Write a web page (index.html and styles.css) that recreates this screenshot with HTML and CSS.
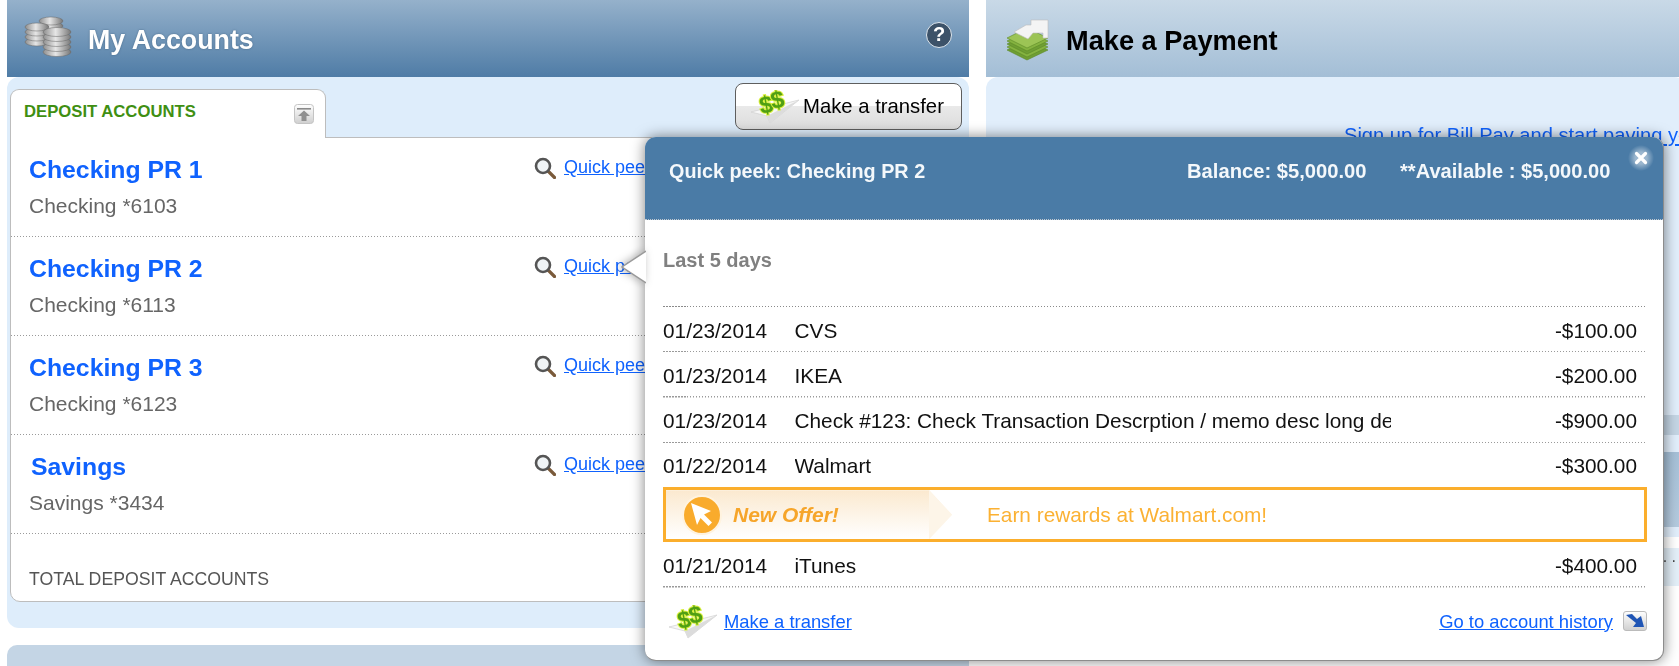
FILE: index.html
```html
<!DOCTYPE html>
<html lang="en">
<head>
<meta charset="utf-8">
<title>My Accounts</title>
<link rel="stylesheet" href="styles.css">
</head>
<body>
<svg class="defs" width="0" height="0" aria-hidden="true">
  <defs>
    <linearGradient id="coin" x1="0" x2="1" y1="0" y2="0"><stop offset="0" stop-color="#8d8d8d"/><stop offset=".45" stop-color="#e6e6e6"/><stop offset="1" stop-color="#777"/></linearGradient>
    <linearGradient id="sq" x1="0" x2="0" y1="0" y2="1"><stop offset="0" stop-color="#fff"/><stop offset="1" stop-color="#cfcfcf"/></linearGradient>
    <radialGradient id="glow"><stop offset=".45" stop-color="#fff" stop-opacity=".45"/><stop offset="1" stop-color="#fff" stop-opacity="0"/></radialGradient>
    <symbol id="lens" viewBox="0 0 22 22">
      <line x1="14" y1="14" x2="20.5" y2="20.5" stroke="#7a5a3a" stroke-width="3.2" stroke-linecap="round"/>
      <circle cx="9" cy="9" r="7" fill="#f0f4f6" stroke="#555" stroke-width="2.6"/>
    </symbol>
    <symbol id="plane" viewBox="0 0 50 34">
      <polygon points="1,22 49,10 20,33 17,26" fill="#f7f7f7" stroke="#d0d0d0" stroke-width=".7"/>
      <polygon points="17,26 49,10 20,33" fill="#dcdcdc"/>
      <g transform="rotate(-10 22 12)">
        <text x="9" y="22" class="dollar">$</text>
        <text x="21" y="19" class="dollar">$</text>
      </g>
    </symbol>
  </defs>
</svg>

<main class="page">
  <section class="col col-left">
    <header class="head head-dark">
      <svg class="coins" viewBox="0 0 50 44" aria-hidden="true">
        <g fill="url(#coin)" stroke="#666" stroke-width=".5">
          <ellipse cx="27" cy="16" rx="12" ry="4"/><ellipse cx="27" cy="11" rx="12" ry="4"/><ellipse cx="27" cy="6" rx="12" ry="4"/>
          <ellipse cx="13" cy="27" rx="12" ry="4"/><ellipse cx="13" cy="22" rx="12" ry="4"/><ellipse cx="13" cy="17" rx="12" ry="4"/><ellipse cx="13" cy="12" rx="12" ry="4"/>
          <ellipse cx="33" cy="37" rx="14" ry="4.5"/><ellipse cx="33" cy="32" rx="14" ry="4.5"/><ellipse cx="33" cy="27" rx="14" ry="4.5"/><ellipse cx="33" cy="22" rx="14" ry="4.5"/><ellipse cx="33" cy="17" rx="14" ry="4.5"/>
        </g>
      </svg>
      <h1 class="title title-light">My Accounts</h1>
      <span class="help">?</span>
    </header>
    <div class="body">
      <div class="tabbar">
        <div class="tab">
          <span class="tab-label">DEPOSIT ACCOUNTS</span>
          <svg class="tab-icon" viewBox="0 0 20 20" aria-hidden="true">
            <rect x=".5" y=".5" width="19" height="19" rx="3" fill="url(#sq)" stroke="#c4c4c4"/>
            <rect x="3" y="4" width="14" height="1.6" fill="#8a8a8a"/>
            <polygon points="10,6.5 16,12 12.5,12 12.5,17 7.5,17 7.5,12 4,12" fill="#8f8f8f"/>
          </svg>
        </div>
        <button class="btn" type="button">
          <svg class="plane-btn" aria-hidden="true"><use href="#plane"/></svg>
          Make a transfer
        </button>
      </div>
      <div class="card">
        <div class="acct">
          <div><a class="acct-name">Checking PR 1</a><p class="acct-sub">Checking *6103</p></div>
          <div class="peek"><svg class="lens" aria-hidden="true"><use href="#lens"/></svg><a class="link">Quick peek</a></div>
        </div>
        <div class="acct">
          <div><a class="acct-name">Checking PR 2</a><p class="acct-sub">Checking *6113</p></div>
          <div class="peek"><svg class="lens" aria-hidden="true"><use href="#lens"/></svg><a class="link">Quick peek</a></div>
        </div>
        <div class="acct">
          <div><a class="acct-name">Checking PR 3</a><p class="acct-sub">Checking *6123</p></div>
          <div class="peek"><svg class="lens" aria-hidden="true"><use href="#lens"/></svg><a class="link">Quick peek</a></div>
        </div>
        <div class="acct">
          <div><a class="acct-name acct-name-sav">Savings</a><p class="acct-sub">Savings *3434</p></div>
          <div class="peek"><svg class="lens" aria-hidden="true"><use href="#lens"/></svg><a class="link">Quick peek</a></div>
        </div>
        <div class="total">TOTAL DEPOSIT ACCOUNTS</div>
      </div>
    </div>
    <div class="next-panel"></div>
  </section>

  <section class="col col-right">
    <header class="head head-light">
      <svg class="money" viewBox="0 0 44 44" aria-hidden="true">
        <g stroke="#5c8a26" stroke-width=".6">
          <polygon points="1,31 21,41 42,31 21,21" fill="#6f9e33"/>
          <polygon points="1,28 21,38 42,28 21,18" fill="#85b340"/>
          <polygon points="1,25 21,35 42,25 21,15" fill="#6f9e33"/>
          <polygon points="1,22 21,32 42,22 21,12" fill="#85b340"/>
          <polygon points="1,19 21,29 42,19 21,9" fill="#9cc455"/>
        </g>
        <polygon points="8,13 20,6 25,6 25,1 42,1 42,19 37,19 37,14 27,14 22,20" fill="#f4f4f4" stroke="#bcbcbc" stroke-width=".6"/>
      </svg>
      <h2 class="title title-dark">Make a Payment</h2>
    </header>
    <div class="pay-body"><a class="link link-bill">Sign up for Bill Pay and start paving your bills online</a></div>
    <div class="band"></div>
    <div class="gap-light"></div>
    <div class="band-dark"></div>
    <div class="gap-light gap-short"></div>
    <div class="white-strip"></div>
    <div class="pale-row">. .</div>
  </section>
</main>

<aside class="popup">
  <svg class="popup-tip" viewBox="0 0 25 36" aria-hidden="true">
    <polygon points="25,2 1,18 25,34" fill="#fff"/>
    <polyline points="25,2 1,18 25,34" fill="none" stroke="#9a9a9a" stroke-width="1.5"/>
  </svg>
  <header class="popup-head">
    <strong class="popup-title">Quick peek: Checking PR 2</strong>
    <strong class="popup-bal">Balance: $5,000.00</strong>
    <strong class="popup-avail">**Available : $5,000.00</strong>
    <svg class="close" viewBox="0 0 26 26" aria-hidden="true">
      <circle cx="13" cy="13" r="13" fill="url(#glow)"/>
      <path d="M8.5 8.5 L17.5 17.5 M17.5 8.5 L8.5 17.5" stroke="#fff" stroke-width="3.2" stroke-linecap="round"/>
    </svg>
  </header>
  <div class="popup-body">
    <h3 class="days">Last 5 days</h3>
    <div class="tx-list">
      <div class="tx"><span class="tx-date">01/23/2014</span><span class="tx-memo">CVS</span><span class="tx-amt">-$100.00</span></div>
      <div class="tx"><span class="tx-date">01/23/2014</span><span class="tx-memo">IKEA</span><span class="tx-amt">-$200.00</span></div>
      <div class="tx"><span class="tx-date">01/23/2014</span><span class="tx-memo">Check #123: Check Transaction Descrption / memo desc long description text</span><span class="tx-amt">-$900.00</span></div>
      <div class="tx tx-flush"><span class="tx-date">01/22/2014</span><span class="tx-memo">Walmart</span><span class="tx-amt">-$300.00</span></div>
      <div class="offer">
        <div class="offer-tag">
          <svg class="offer-icon" viewBox="0 0 42 42" aria-hidden="true">
            <circle cx="21" cy="21" r="19" fill="#f9ab2c" stroke="#fff3df" stroke-width="2"/>
            <polygon points="10,9 30,17 23,20.5 31,28.5 27.5,32 19.5,24 16,31" fill="#fff"/>
          </svg>
          <em class="offer-new">New Offer!</em>
        </div>
        <span class="offer-text">Earn rewards at Walmart.com!</span>
      </div>
      <div class="tx"><span class="tx-date">01/21/2014</span><span class="tx-memo">iTunes</span><span class="tx-amt">-$400.00</span></div>
    </div>
    <footer class="popup-foot">
      <svg class="plane-foot" aria-hidden="true"><use href="#plane"/></svg>
      <a class="link">Make a transfer</a>
      <a class="link link-history">Go to account history</a>
      <svg class="go" viewBox="0 0 24 20" aria-hidden="true">
        <rect x=".5" y=".5" width="23" height="19" rx="2.5" fill="url(#sq)" stroke="#bbb"/>
        <path d="M3 4 L9 3 L14 8 L18 5 L21 16 L10 16 L13 12 Z" fill="#1f55b5"/>
      </svg>
    </footer>
  </div>
</aside>
</body>
</html>
```

FILE: styles.css
```css
* { box-sizing: border-box; }
html, body { margin: 0; height: 666px; overflow: hidden; background: #fff; }
body { font-family: "Liberation Sans", Arial, sans-serif; position: relative; }
.defs { position: absolute; }
h1, h2, h3, p { margin: 0; }

.page { display: flex; gap: 17px; padding-left: 7px; height: 666px; overflow: hidden; filter: blur(.35px); }
.col { flex: none; display: flex; flex-direction: column; }
.col-left { width: 962px; }
.col-right { width: 700px; }

.head { height: 77px; flex: none; display: flex; align-items: center; }
.head-dark { background: linear-gradient(#95b1cb, #4f7ca6); padding: 0 16px 0 17px; }
.head-light { background: linear-gradient(#c9d9e7, #a3bed6); padding-left: 20px; }
.title { font-size: 26.8px; font-weight: bold; margin-top: 4px; }
.title-light { color: #fff; margin-left: 14px; flex: 1; text-shadow: 0 0 2px rgba(40, 70, 100, .6); }
.title-dark { color: #000; margin-left: 16px; font-size: 27.2px; }
.coins { width: 50px; height: 44px; margin-top: -4px; }
.money { width: 44px; height: 44px; margin-top: 4px; }
.help { width: 26px; height: 26px; border-radius: 50%; background: #3c5269; border: 1.5px solid #dfe7ee; color: #fff; font-weight: bold; font-size: 20px; line-height: 23px; text-align: center; margin: -8px 1px 0 0; }

.body { height: 551px; flex: none; background: #deedfb; border-radius: 12px; padding: 0 7px 26px 3px; display: flex; flex-direction: column; }
.tabbar { height: 60px; flex: none; display: flex; justify-content: space-between; align-items: flex-start; }
.tab { width: 316px; height: 49px; margin-top: 12px; flex: none; background: #fff; border: 1.5px solid #bdbdbd; border-bottom: 0; border-radius: 9px 9px 0 0; display: flex; justify-content: space-between; padding: 12px 11px 0 13px; position: relative; z-index: 1; }
.tab-label { color: #3f8f12; font-weight: bold; font-size: 16.7px; line-height: 20px; }
.tab-icon { width: 20px; height: 20px; margin-top: 2px; }
.btn { width: 227px; height: 47px; margin-top: 6px; border: 1.5px solid #5e5e5e; border-radius: 8px; background: linear-gradient(#fff 50%, #e9e9e9 50%, #dcdcdc); font: 20.3px "Liberation Sans", Arial, sans-serif; color: #000; display: flex; align-items: center; gap: 3px; padding: 0 0 0 14px; }
.plane-btn { width: 50px; height: 34px; flex: none; }
.plane-foot { width: 50px; height: 34px; flex: none; }
.dollar { font-family: "Liberation Sans", Arial, sans-serif; font-weight: bold; font-size: 24px; fill: #4f9f14; stroke: #d8ee3c; stroke-width: 2px; paint-order: stroke; }

.card { flex: 1; background: #fff; border: 1.5px solid #bdbdbd; border-radius: 0 0 10px 10px; display: flex; flex-direction: column; }
.acct { height: 99px; flex: none; display: grid; grid-template-columns: 505px 1fr; padding: 17px 0 0 18px; background: repeating-linear-gradient(90deg, #9a9a9a 0 1.5px, transparent 1.5px 3px) left bottom / 100% 1.5px no-repeat; }
.acct-name { display: block; color: #0f62fe; font-weight: bold; font-size: 24.8px; line-height: 30px; }
.acct-name-sav { margin-left: 2px; }
.acct-sub { color: #666; font-size: 21px; line-height: 26px; margin-top: 8px; }
.peek { display: flex; align-items: flex-start; gap: 8px; margin-top: -1px; }
.lens { width: 22px; height: 22px; flex: none; margin-top: 3px; }
.link { color: #0f62fe; text-decoration: underline; font-size: 18px; line-height: 26px; white-space: nowrap; }
.total { color: #555; font-size: 17.7px; line-height: 22px; padding: 34px 0 0 18px; }
.next-panel { height: 40px; flex: none; margin-top: 17px; background: #c4d5e5; border-radius: 10px 10px 0 0; }

.pay-body { height: 338px; flex: none; background: #e1eefb; border-radius: 12px 12px 0 0; padding: 46px 0 0 358px; }
.link-bill { font-size: 20.1px; line-height: 24px; }
.band { height: 20px; flex: none; background: #c4d5e4; }
.gap-light { height: 17px; flex: none; background: #e1eefb; }
.gap-short { height: 10px; }
.band-dark { height: 75px; flex: none; background: linear-gradient(#a6c0d7, #b4cade); }
.white-strip { height: 11px; flex: none; background: #fff; }
.pale-row { height: 38px; flex: none; background: #e3eff8; color: #444; font-size: 16px; text-align: right; padding-right: 10px; }

.popup { position: absolute; left: 645px; top: 137px; width: 1019px; height: 524px; background: #fff; border-radius: 11px; border-right: 1.5px solid #8c8c8c; border-bottom: 1.5px solid #8c8c8c; box-shadow: 0 0 14px rgba(0, 0, 0, .5); display: flex; flex-direction: column; filter: blur(.3px); }
.popup-tip { position: absolute; left: -24px; top: 112px; width: 25px; height: 36px; filter: drop-shadow(-2px 0 4px rgba(0, 0, 0, .3)); }
.popup-head { height: 83px; flex: none; background: #4a7ba6; border-radius: 11px 11px 0 0; border-bottom: 1px dotted #c0c8d0; display: flex; align-items: center; padding: 0 9px 13px 24px; color: #f4f8fb; position: relative; }
.popup-title { width: 518px; flex: none; font-size: 19.8px; }
.popup-bal { width: 213px; flex: none; font-size: 20.2px; white-space: nowrap; }
.popup-avail { flex: none; font-size: 20.1px; white-space: nowrap; }
.close { position: absolute; right: 9px; top: 8px; width: 26px; height: 26px; }

.popup-body { flex: 1; padding: 0 16px 0 18px; display: flex; flex-direction: column; }
.days { color: #808080; font-size: 20px; line-height: 24px; font-weight: bold; margin-top: 28px; height: 58px; flex: none; }
.tx-list { padding-top: 1px; background: repeating-linear-gradient(90deg, #8a8a8a 0 1.5px, transparent 1.5px 3px) left top / 100% 1px no-repeat; display: flex; flex-direction: column; }
.tx { height: 45.4px; flex: none; display: flex; align-items: center; padding-top: 2px; background: repeating-linear-gradient(90deg, #9a9a9a 0 1.5px, transparent 1.5px 3px) left bottom / 100% 1.5px no-repeat; font-size: 20.8px; color: #111; }
.tx-flush { background: none; height: 44px; }
.tx-date { width: 131.5px; flex: none; }
.tx-memo { width: 596.5px; flex: none; overflow: hidden; white-space: nowrap; }
.tx-amt { margin-left: auto; padding-right: 10px; }

.offer { height: 55px; flex: none; border: 3.5px solid #fbae2c; display: flex; align-items: center; color: #fbb133; }
.offer-tag { width: 286px; height: 100%; flex: none; display: flex; align-items: center; gap: 10px; padding-left: 15px; background: linear-gradient(90deg, transparent 92%, #fdf5e8 92%), linear-gradient(#fbe9cf, #fff); clip-path: polygon(0 0, 92% 0, 100% 50%, 92% 100%, 0 100%); }
.offer-icon { width: 42px; height: 42px; flex: none; }
.offer-new { font-weight: bold; font-size: 21px; color: #f6a52a; }
.offer-text { font-size: 20.8px; margin-left: 35px; }

.popup-foot { flex: 1; display: flex; align-items: flex-start; padding: 17px 0 0 5px; }
.popup-foot .link { font-size: 18.4px; line-height: 34px; margin-left: 6px; }
.popup-foot .link-history { margin-left: auto; margin-right: 10px; }
.go { width: 24px; height: 20px; flex: none; margin-top: 6px; }
```
